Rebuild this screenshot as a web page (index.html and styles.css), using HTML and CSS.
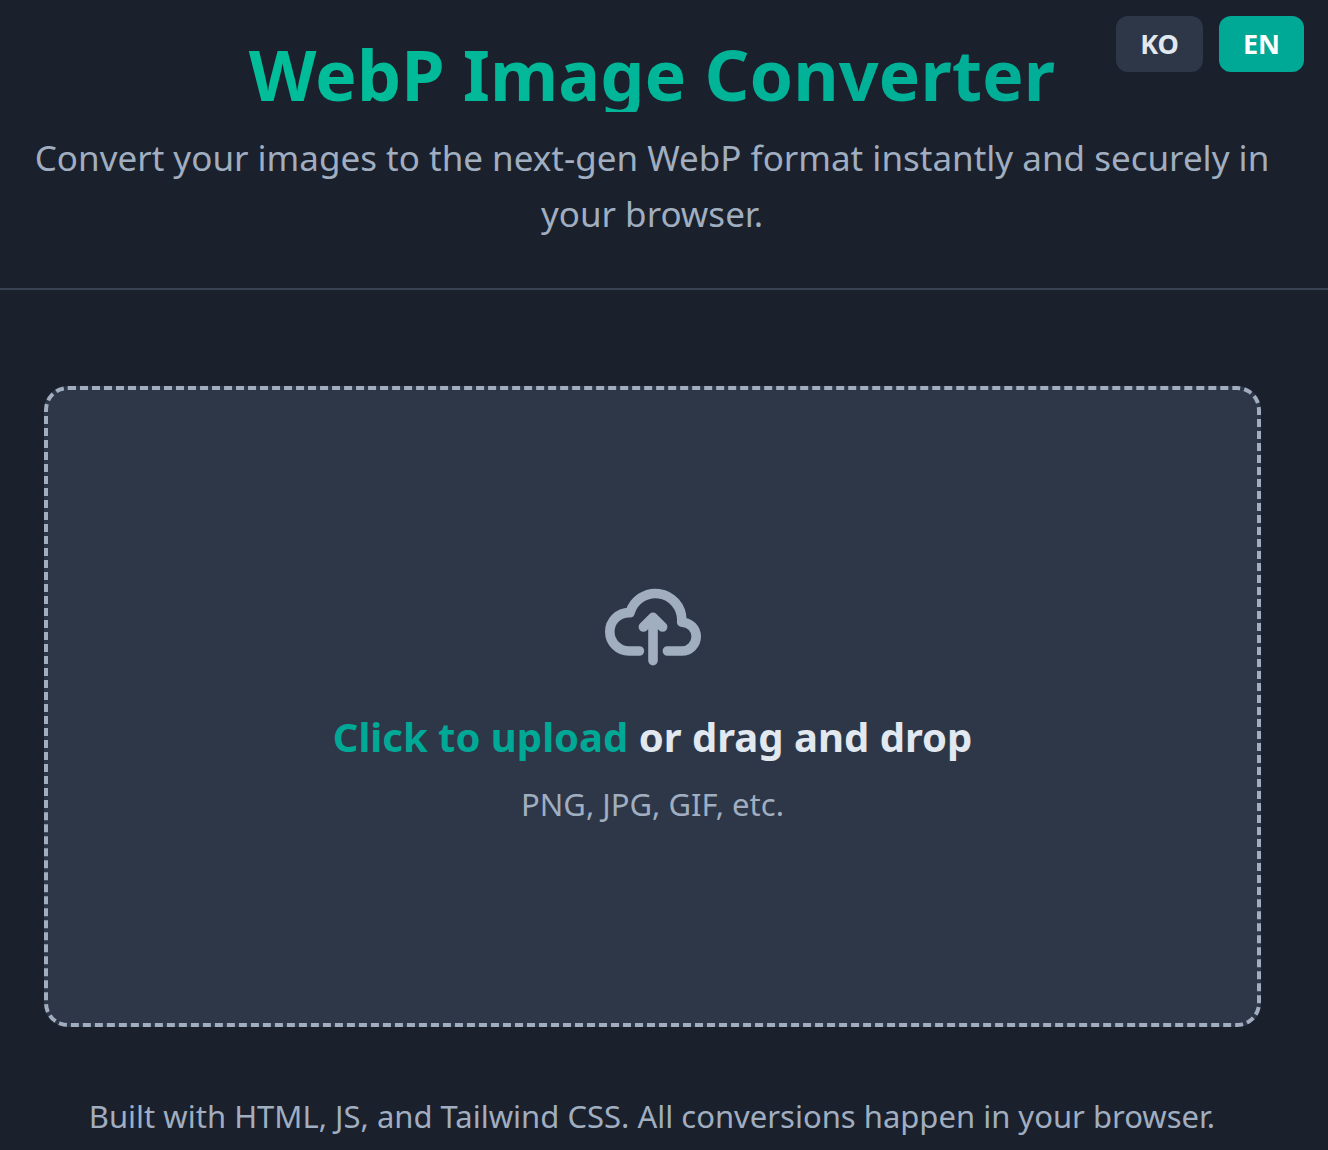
FILE: index.html
```
<!DOCTYPE html>
<html lang="en">
<head>
  <meta charset="UTF-8">
  <meta name="viewport" content="width=device-width, initial-scale=1.0">
  <title>WebP Image Converter</title>
  <link rel="stylesheet" href="styles.css">
</head>
<body>
  <div class="lang-switch">
    <button type="button" class="lang-btn">KO</button>
    <button type="button" class="lang-btn active">EN</button>
  </div>
  <header class="header">
    <h1 class="title">WebP Image Converter</h1>
    <p class="subtitle">Convert your images to the next-gen WebP format instantly and securely in your browser.</p>
  </header>
  <main class="main">
    <label for="file-input" class="drop-zone">
      <svg class="upload-icon" viewBox="0 0 20 16" fill="none" aria-hidden="true">
        <path stroke="currentColor" stroke-linecap="round" stroke-linejoin="round" stroke-width="2" d="M13 13h3a3 3 0 0 0 0-6h-.025A5.56 5.56 0 0 0 16 6.5 5.5 5.5 0 0 0 5.207 5.021C5.137 5.017 5.071 5 5 5a4 4 0 0 0 0 8h2.167M10 15V6m0 0L8 8m2-2 2 2"/>
      </svg>
      <span class="drop-text"><span class="accent">Click to upload</span> or drag and drop</span>
      <span class="drop-hint">PNG, JPG, GIF, etc.</span>
      <input type="file" id="file-input" accept="image/*" multiple hidden>
    </label>
  </main>
  <footer class="footer">
    <p>Built with HTML, JS, and Tailwind CSS. All conversions happen in your browser.</p>
  </footer>
</body>
</html>
```
FILE: styles.css
```
* {
  box-sizing: border-box;
}
body {
  margin: 0;
  background-color: #1a202c;
  color: #e2e8f0;
  font-family: "Noto Sans", "Open Sans", sans-serif;
}
h1, p {
  margin: 0;
}
.lang-switch {
  position: absolute;
  top: 16px;
  right: 24px;
  display: flex;
  gap: 16px;
}
.lang-btn {
  padding: 8px 24px;
  border: 0;
  border-radius: 12px;
  background-color: #2d3748;
  color: #e2e8f0;
  font-family: inherit;
  font-size: 27px;
  font-weight: 700;
  line-height: 40px;
  cursor: pointer;
}
.lang-btn.active {
  background-color: #00a896;
  color: #fff;
}
.header {
  padding: 32px 24px 46px 0;
  border-bottom: 2px solid #384252;
  text-align: center;
}
.title {
  padding-top: 4px;
  background-image: linear-gradient(to right, #02c39a, #00a896);
  -webkit-background-clip: text;
  background-clip: text;
  color: transparent;
  font-size: 70px;
  font-weight: 700;
  line-height: 76px;
}
.subtitle {
  margin-top: 18px;
  color: #a0aec0;
  font-size: 35px;
  line-height: 56px;
}
.main {
  padding: 96px 67px 0 44px;
}
.drop-zone {
  display: flex;
  flex-direction: column;
  align-items: center;
  padding: 189px 24px 195px;
  border: 4px dashed #a0aec0;
  border-radius: 24px;
  background-color: #2d3748;
  cursor: pointer;
}
.upload-icon {
  width: 96px;
  height: 96px;
  margin-bottom: 34px;
  color: #a0aec0;
}
.drop-text {
  margin-bottom: 15px;
  font-size: 40px;
  font-weight: 700;
  line-height: 56px;
}
.accent {
  color: #00a896;
}
.drop-hint {
  color: #a0aec0;
  font-size: 31px;
  line-height: 48px;
}
.footer {
  padding: 65px 24px 8px 0;
  color: #a0aec0;
  font-size: 31px;
  line-height: 48px;
  text-align: center;
}
```
